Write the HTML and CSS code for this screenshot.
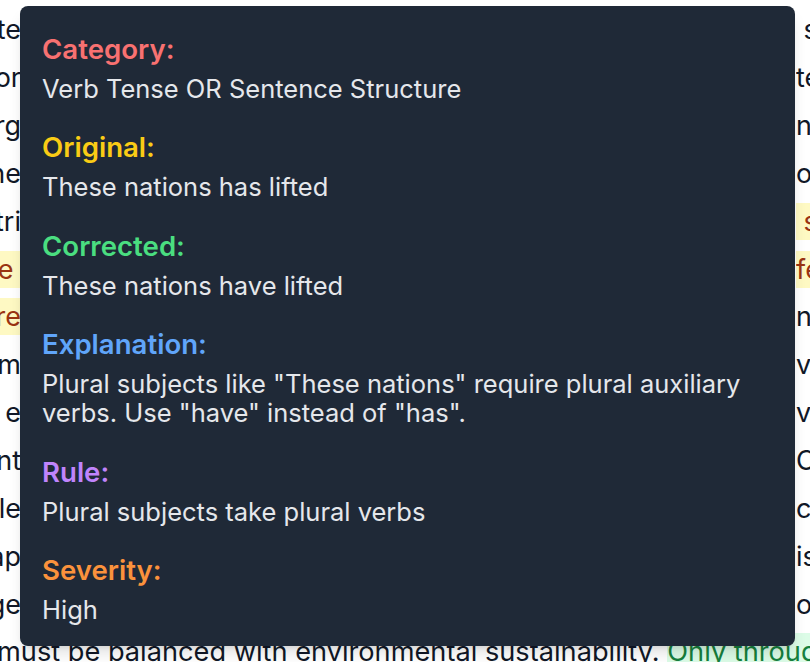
FILE: index.html
```html
<!DOCTYPE html>
<html lang="en">
<head>
<meta charset="utf-8">
<title>Grammar issue</title>
<link rel="stylesheet" href="styles.css">
</head>
<body>
<main class="page">
  <div class="article">
    <div class="line"><span class="lft">state</span><span class="rgt">&nbsp;sustainable</span></div>
    <div class="line"><span class="lft">for</span><span class="rgt">technology</span></div>
    <div class="line"><span class="lft">org</span><span class="rgt">nce</span></div>
    <div class="line"><span class="lft">the</span><span class="rgt">or</span></div>
    <div class="line"><span class="lft">distri</span><span class="rgt"><mark class="hl-y">&nbsp;social</mark></span></div>
    <div class="line"><span class="lft"><mark class="hl-y">the&nbsp;</mark></span><span class="rgt"><mark class="hl-y">fe</mark></span></div>
    <div class="line"><span class="lft"><mark class="hl-y">are</mark></span><span class="rgt">n</span></div>
    <div class="line"><span class="lft">em</span><span class="rgt">ve</span></div>
    <div class="line"><span class="lft">to e</span><span class="rgt">ve</span></div>
    <div class="line"><span class="lft">nt</span><span class="rgt">C</span></div>
    <div class="line"><span class="lft">ble</span><span class="rgt">c</span></div>
    <div class="line"><span class="lft">ap</span><span class="rgt">is</span></div>
    <div class="line"><span class="lft">ge</span><span class="rgt">o</span></div>
    <div class="line full">must be balanced with environmental sustainability. <mark class="hl-g">Only through</mark></div>
  </div>

  <aside class="tooltip">
    <section class="field">
      <h3 class="label c-red">Category:</h3>
      <p class="value">Verb Tense OR Sentence Structure</p>
    </section>
    <section class="field">
      <h3 class="label c-yellow">Original:</h3>
      <p class="value">These nations has lifted</p>
    </section>
    <section class="field">
      <h3 class="label c-green">Corrected:</h3>
      <p class="value">These nations have lifted</p>
    </section>
    <section class="field">
      <h3 class="label c-blue">Explanation:</h3>
      <p class="value">Plural subjects like "These nations" require plural auxiliary verbs. Use "have" instead of "has".</p>
    </section>
    <section class="field">
      <h3 class="label c-purple">Rule:</h3>
      <p class="value">Plural subjects take plural verbs</p>
    </section>
    <section class="field">
      <h3 class="label c-orange">Severity:</h3>
      <p class="value">High</p>
    </section>
  </aside>
</main>
</body>
</html>
```

FILE: styles.css
```css
* { box-sizing: border-box; }
html, body {
  margin: 0;
  padding: 0;
  background: #ffffff;
  overflow: hidden;
}
body {
  font-family: Inter, "Noto Sans", sans-serif;
  width: 810px;
  height: 662px;
}
.page {
  position: relative;
  width: 810px;
  height: 662px;
  overflow: hidden;
}
.article {
  padding-top: 6px;
  font-size: 27px;
  color: #111827;
}
.line {
  display: flex;
  justify-content: space-between;
  align-items: center;
  height: 47.85px;
  white-space: nowrap;
}
.lft {
  display: flex;
  justify-content: flex-end;
  width: 21px;
  overflow: hidden;
}
.rgt {
  display: flex;
  justify-content: flex-start;
  width: 14px;
  overflow: hidden;
}
.full {
  display: block;
  margin-left: -3px;
  line-height: 47.85px;
  font-size: 27.2px;
}
mark {
  color: inherit;
  background: none;
  padding: 2px 0;
}
.hl-y { background: #fef9c3; color: #9a3412; }
.hl-g { background: #dcfce7; color: #15803d; }

.tooltip {
  position: absolute;
  left: 20px;
  top: 6px;
  width: 775px;
  background: #1f2937;
  border-radius: 8px;
  padding: 28px 22px 22px;
  box-shadow: 0 10px 15px -3px rgba(0,0,0,0.12), 0 4px 6px -4px rgba(0,0,0,0.12);
  display: flex;
  flex-direction: column;
  gap: 28.8px;
}
.field { display: flex; flex-direction: column; gap: 10px; }
.label {
  margin: 0;
  font-size: 27.6px;
  font-weight: 600;
  line-height: 30px;
}
.value {
  margin: 0;
  font-size: 25.5px;
  line-height: 29.5px;
  color: #e5e7eb;
}
.c-red { color: #f87171; }
.c-yellow { color: #facc15; }
.c-green { color: #4ade80; }
.c-blue { color: #60a5fa; }
.c-purple { color: #c084fc; }
.c-orange { color: #fb923c; }
```
